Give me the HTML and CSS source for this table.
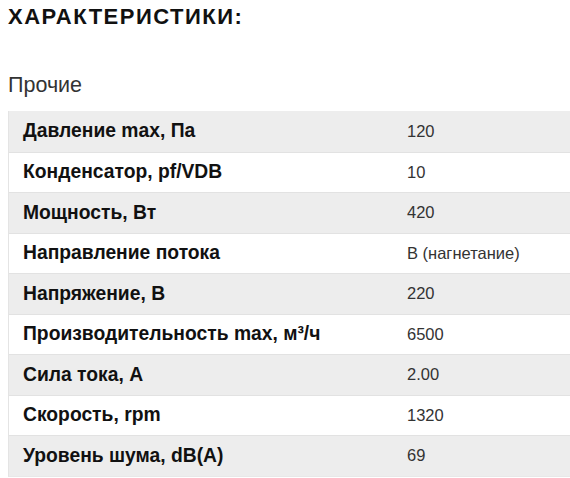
FILE: index.html
```html
<!DOCTYPE html>
<html lang="ru">
<head>
<meta charset="utf-8">
<link rel="stylesheet" href="styles.css">
</head>
<body>
<h2 class="title">ХАРАКТЕРИСТИКИ:</h2>
<h3 class="group">Прочие</h3>
<div class="specs">
  <div class="row"><div class="name">Давление max, Па</div><div class="val">120</div></div>
  <div class="row"><div class="name">Конденсатор, pf/VDB</div><div class="val">10</div></div>
  <div class="row"><div class="name">Мощность, Вт</div><div class="val">420</div></div>
  <div class="row"><div class="name">Направление потока</div><div class="val">В (нагнетание)</div></div>
  <div class="row"><div class="name">Напряжение, В</div><div class="val">220</div></div>
  <div class="row"><div class="name">Производительность max, м³/ч</div><div class="val">6500</div></div>
  <div class="row"><div class="name">Сила тока, А</div><div class="val">2.00</div></div>
  <div class="row"><div class="name">Скорость, rpm</div><div class="val">1320</div></div>
  <div class="row"><div class="name">Уровень шума, dB(A)</div><div class="val">69</div></div>
</div>
</body>
</html>
```
FILE: styles.css
```css
html, body { margin: 0; padding: 0; background: #fff; }
body {
  font-family: "Liberation Sans", Arial, sans-serif;
  color: #222;
  padding-left: 8px;
  overflow: hidden;
}
.title {
  margin: 0;
  padding-top: 4px;
  font-size: 22px;
  font-weight: bold;
  letter-spacing: 1.5px;
  line-height: 26px;
  color: #111;
}
.group {
  margin: 0;
  padding-top: 43px;
  font-size: 21.5px;
  font-weight: normal;
  line-height: 24px;
  color: #333;
}
.specs {
  margin-top: 14px;
  border-left: 1px solid #e4e4e4;
  border-bottom: 1px solid #e8e8e8;
}
.row {
  display: grid;
  grid-template-columns: 398px 1fr;
  align-items: center;
  height: 39.5px;
  border-top: 1px solid #e2e2e2;
  background: #fff;
}
.row:first-child { border-top: none; height: 40.5px; }
.row:nth-child(odd) { background: #ededed; }
.name {
  padding-left: 14px;
  font-size: 19.3px;
  font-weight: bold;
  color: #111;
}
.val {
  font-size: 16.5px;
  color: #333;
}
```
